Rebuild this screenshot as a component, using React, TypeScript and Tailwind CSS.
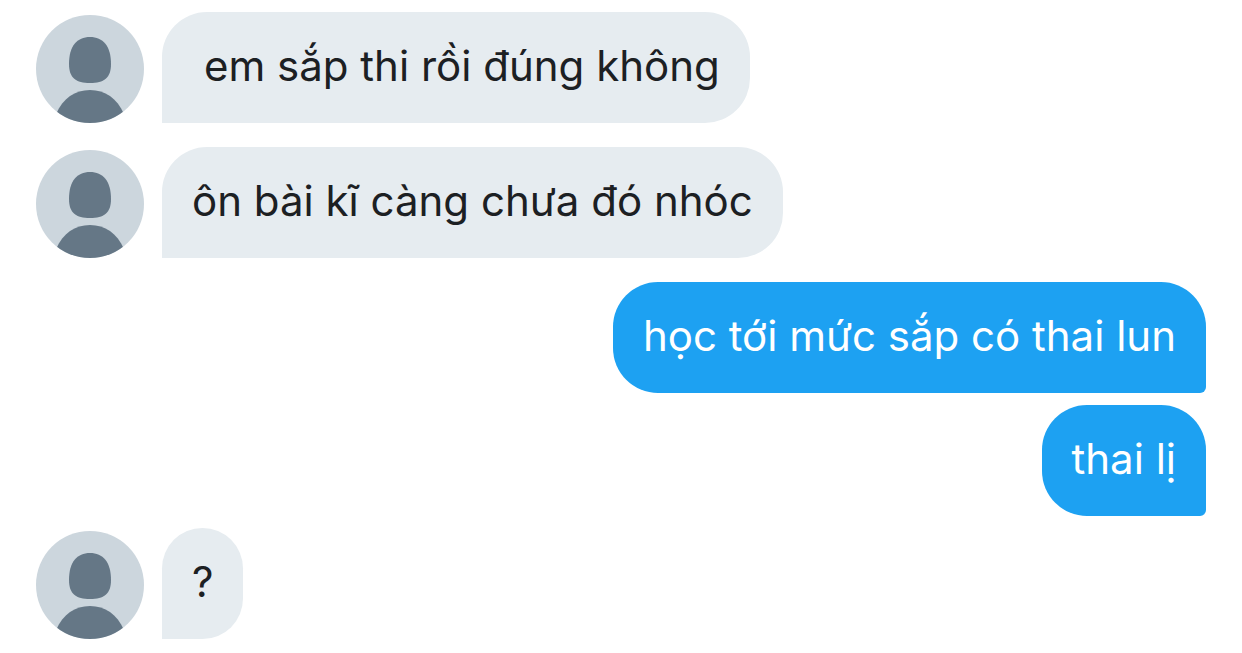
type Message = {
  text: string;
  mine?: boolean;
  spacing: string;
  indent?: boolean;
};

const messages: Message[] = [
  { text: "em sắp thi rồi đúng không", spacing: "mt-0", indent: true },
  { text: "ôn bài kĩ càng chưa đó nhóc", spacing: "mt-6" },
  { text: "học tới mức sắp có thai lun", mine: true, spacing: "mt-6" },
  { text: "thai lị", mine: true, spacing: "mt-3" },
  { text: "?", spacing: "mt-3" },
];

function Avatar() {
  return (
    <svg
      viewBox="0 0 108 108"
      className="size-[108px] shrink-0 rounded-full bg-[#ccd6dd]"
      aria-hidden="true"
    >
      <path
        d="M54 22C41 22 33 31 33 49C33 63 40 68 54 68C68 68 75 63 75 49C75 31 67 22 54 22Z"
        fill="#657786"
      />
      <path
        d="M20 99C27 83 39 75 54 75C69 75 81 83 88 99V108H20Z"
        fill="#657786"
      />
    </svg>
  );
}

function Bubble({ text, mine, indent }: Message) {
  return (
    <p
      className={`rounded-[45px] pt-6 pr-[30px] pb-[27px] ${
        indent ? "pl-[42px]" : "pl-[30px]"
      } ${
        mine
          ? "rounded-br-md bg-[#1da1f2] text-white"
          : "rounded-bl-none bg-[#e6ecf0] text-[#1c2023]"
      }`}
    >
      {text}
    </p>
  );
}

export default function App() {
  return (
    <main className="bg-white px-9 py-3 font-['Inter',sans-serif] text-[42px] leading-[60px]">
      <ul>
        {messages.map((message) => (
          <li
            key={message.text}
            className={`flex items-end gap-[18px] ${message.spacing} ${
              message.mine ? "justify-end" : "justify-start"
            }`}
          >
            {!message.mine && <Avatar />}
            <Bubble {...message} />
          </li>
        ))}
      </ul>
    </main>
  );
}
